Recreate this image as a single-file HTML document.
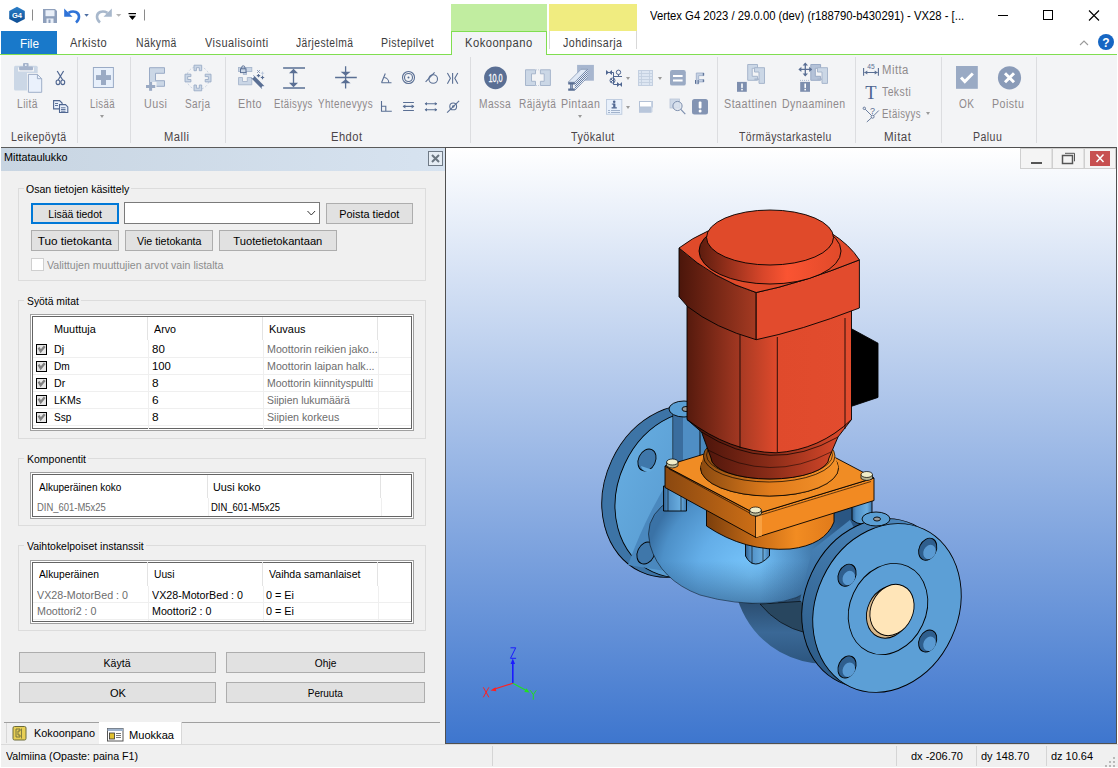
<!DOCTYPE html>
<html><head><meta charset="utf-8">
<style>
*{box-sizing:border-box}
html,body{margin:0;padding:0;width:1118px;height:768px;overflow:hidden;background:#fff;font-family:"Liberation Sans",sans-serif}
.a{position:absolute}
.t{position:absolute;white-space:pre;transform-origin:0 0;font-family:"Liberation Sans",sans-serif}
.sep{position:absolute;top:57px;width:1px;height:86px;background:#dcdde0}
.btn{position:absolute;background:#e1e1e1;border:1px solid #adadad;display:flex;align-items:center;justify-content:center;font-size:11px;color:#000;line-height:11px}
.btn span{display:inline-block;white-space:pre;padding-top:1px}
.btn.blue{border:2px solid #0078d7}
.grp{position:absolute;border:1px solid #dcdcdc}
.tbl{position:absolute;background:#fff;border:1px solid #a0a0a0;box-shadow:inset 0 0 0 1px #fff, inset 0 0 0 2px #646464}
.hl{position:absolute;height:1px;background:#f0f0f0}
.vl{position:absolute;width:1px;background:#ececec}
.cb{position:absolute;width:11px;height:11px;border:1px solid #333;background:#dcdcdc}
.dd{position:absolute;width:0;height:0;border-left:2.5px solid transparent;border-right:2.5px solid transparent;border-top:3px solid #9a9a9a}
</style></head><body>
<!-- title bar -->
<div class="a" style="left:0;top:0;width:1118px;height:31px;background:#fff"></div>
<div class="a" style="left:451px;top:4px;width:96px;height:27px;background:#c1eda0"></div>
<div class="a" style="left:549px;top:4px;width:88px;height:27px;background:#f0ec80"></div>
<!-- tab row -->
<div class="a" style="left:1px;top:31px;width:56px;height:23px;background:#1979ca"></div>
<div class="a" style="left:0;top:54px;width:1117px;height:1px;background:#80de50"></div>
<div class="a" style="left:451px;top:31px;width:96px;height:24px;background:#f3f4f6;border:1px solid #80de50;border-bottom:none"></div>
<div class="a" style="left:549px;top:31px;width:1px;height:18px;background:#d8d8d8"></div>
<div class="a" style="left:636px;top:31px;width:1px;height:18px;background:#d8d8d8"></div>
<!-- ribbon -->
<div class="a" style="left:1px;top:55px;width:1116px;height:92px;background:#f3f4f6"></div>
<div class="a" style="left:0;top:147px;width:1118px;height:1px;background:#5a5a5a"></div>
<div class="sep" style="left:77px"></div><div class="sep" style="left:130px"></div><div class="sep" style="left:225px"></div>
<div class="sep" style="left:470px"></div><div class="sep" style="left:717px"></div><div class="sep" style="left:855px"></div>
<div class="sep" style="left:941px"></div><div class="sep" style="left:1036px"></div>
<div class="dd" style="left:99.5px;top:115px"></div>
<div class="dd" style="left:577.5px;top:115px"></div>
<div class="dd" style="left:625.5px;top:77px"></div>
<div class="dd" style="left:657.5px;top:77px"></div>
<div class="dd" style="left:625.5px;top:106px"></div>
<div class="dd" style="left:925.5px;top:112px"></div>
<!-- left panel -->
<div class="a" style="left:1px;top:148px;width:444px;height:596px;background:#f0f0f0"></div>
<div class="a" style="left:1px;top:148px;width:444px;height:23px;background:linear-gradient(to right,#c8d5e2,#d7e3f0)"></div>
<div class="a" style="left:428px;top:151px;width:15px;height:15px;border:1px solid #6f7a86;background:#e6edf4"></div>
<div class="grp" style="left:18px;top:188px;width:408px;height:93px"></div>
<div class="a" style="left:24px;top:184px;width:107px;height:8px;background:#f0f0f0"></div>
<div class="a" style="left:124px;top:202px;width:196px;height:22px;background:#fff;border:1px solid #7a7a7a"></div>
<div class="a" style="left:31px;top:258px;width:13px;height:13px;background:#fff;border:1px solid #cfcfcf"></div>
<div class="grp" style="left:18px;top:300px;width:408px;height:139px"></div>
<div class="a" style="left:24px;top:296px;width:57px;height:8px;background:#f0f0f0"></div>
<div class="tbl" style="left:30px;top:314px;width:384px;height:117px"></div>
<div class="grp" style="left:18px;top:458px;width:408px;height:68px"></div>
<div class="a" style="left:24px;top:454px;width:64px;height:8px;background:#f0f0f0"></div>
<div class="tbl" style="left:30px;top:472px;width:384px;height:47px"></div>
<div class="grp" style="left:18px;top:545px;width:408px;height:86px"></div>
<div class="a" style="left:24px;top:541px;width:122px;height:8px;background:#f0f0f0"></div>
<div class="tbl" style="left:30px;top:560px;width:384px;height:64px"></div>
<div class="a" style="left:147px;top:317px;width:1px;height:23px;background:#e3e3e3"></div>
<div class="a" style="left:262px;top:317px;width:1px;height:23px;background:#e3e3e3"></div>
<div class="a" style="left:377px;top:317px;width:1px;height:23px;background:#e3e3e3"></div>
<div class="a" style="left:148px;top:340px;width:1px;height:89px;background:#efefef"></div>
<div class="a" style="left:263px;top:340px;width:1px;height:89px;background:#efefef"></div>
<div class="a" style="left:378px;top:340px;width:1px;height:89px;background:#efefef"></div>
<div class="a" style="left:33px;top:357px;width:378px;height:1px;background:#efefef"></div>
<div class="a" style="left:33px;top:374px;width:378px;height:1px;background:#efefef"></div>
<div class="a" style="left:33px;top:391px;width:378px;height:1px;background:#efefef"></div>
<div class="a" style="left:33px;top:408px;width:378px;height:1px;background:#efefef"></div>
<div class="a" style="left:33px;top:425px;width:378px;height:1px;background:#efefef"></div>
<div class="a" style="left:207px;top:475px;width:1px;height:23px;background:#e3e3e3"></div>
<div class="a" style="left:380px;top:475px;width:1px;height:23px;background:#e3e3e3"></div>
<div class="a" style="left:208px;top:498px;width:1px;height:18px;background:#efefef"></div>
<div class="a" style="left:381px;top:498px;width:1px;height:18px;background:#efefef"></div>
<div class="a" style="left:147px;top:562px;width:1px;height:24px;background:#e3e3e3"></div>
<div class="a" style="left:262px;top:562px;width:1px;height:24px;background:#e3e3e3"></div>
<div class="a" style="left:377px;top:562px;width:1px;height:24px;background:#e3e3e3"></div>
<div class="a" style="left:148px;top:586px;width:1px;height:35px;background:#efefef"></div>
<div class="a" style="left:263px;top:586px;width:1px;height:35px;background:#efefef"></div>
<div class="a" style="left:378px;top:586px;width:1px;height:35px;background:#efefef"></div>
<div class="a" style="left:33px;top:602px;width:378px;height:1px;background:#efefef"></div>
<div class="a" style="left:33px;top:619px;width:378px;height:1px;background:#efefef"></div>
<div class="btn blue" style="left:31px;top:203px;width:88px;height:21px"><span style="transform:scaleX(0.953)">Lisää tiedot</span></div>
<div class="btn" style="left:325.5px;top:203px;width:87.5px;height:21px"><span style="transform:scaleX(0.991)">Poista tiedot</span></div>
<div class="btn" style="left:31px;top:230px;width:88px;height:21px"><span style="transform:scaleX(1.068)">Tuo tietokanta</span></div>
<div class="btn" style="left:125px;top:230px;width:88px;height:21px"><span style="transform:scaleX(0.970)">Vie tietokanta</span></div>
<div class="btn" style="left:219px;top:230px;width:118px;height:21px"><span style="transform:scaleX(1.015)">Tuotetietokantaan</span></div>
<div class="btn" style="left:19px;top:652px;width:197px;height:21px"><span style="transform:scaleX(0.959)">Käytä</span></div>
<div class="btn" style="left:226px;top:652px;width:199px;height:21px"><span style="transform:scaleX(0.925)">Ohje</span></div>
<div class="btn" style="left:19px;top:682px;width:197px;height:21px"><span style="transform:scaleX(1.006)">OK</span></div>
<div class="btn" style="left:226px;top:682px;width:199px;height:21px"><span style="transform:scaleX(0.908)">Peruuta</span></div>
<!-- bottom tabs -->
<div class="a" style="left:4px;top:722px;width:436px;height:1px;background:#a0a0a0"></div>
<div class="a" style="left:6px;top:723px;width:93px;height:20px;background:#f0f0f0;border-left:1px solid #d8d8d8"></div>
<div class="a" style="left:99px;top:722px;width:83px;height:22px;background:#fff;border-right:1px solid #d8d8d8"></div>
<!-- viewport -->
<div class="a" style="left:445px;top:147px;width:673px;height:597px;background:#fff"></div>
<div class="a" style="left:446px;top:148px;width:670px;height:595px;background:linear-gradient(#ffffff,#3e76ce);border:none"></div>
<div class="a" style="left:445px;top:147px;width:672px;height:1px;background:#505050"></div>
<div class="a" style="left:445px;top:147px;width:1px;height:597px;background:#505050"></div>
<div class="a" style="left:445px;top:743px;width:672px;height:1px;background:#505050"></div>
<div class="a" style="left:1116px;top:147px;width:1px;height:597px;background:#505050"></div>
<!-- status bar -->
<div class="a" style="left:0;top:744px;width:1118px;height:23px;background:#f0f0f0;border-top:1px solid #dadada"></div>
<div class="a" style="left:492px;top:746px;width:1px;height:20px;background:#d5d5d5"></div>
<div class="a" style="left:896px;top:746px;width:1px;height:20px;background:#d5d5d5"></div>
<div class="a" style="left:976px;top:746px;width:1px;height:20px;background:#d5d5d5"></div>
<div class="a" style="left:1046px;top:746px;width:1px;height:20px;background:#d5d5d5"></div>
<div class="a" style="left:0;top:55px;width:1px;height:713px;background:#fff"></div>
<svg class="a" style="left:0;top:0" width="1118" height="768" viewBox="0 0 1118 768">
<defs>
<clipPath id="vp"><rect x="446" y="148" width="670" height="595"/></clipPath>
<linearGradient id="motorG" x1="687" y1="0" x2="852" y2="0" gradientUnits="userSpaceOnUse">
<stop offset="0" stop-color="#561a0d"/><stop offset="0.323" stop-color="#a33822"/><stop offset="0.324" stop-color="#a83a23"/><stop offset="0.55" stop-color="#e04a2c"/><stop offset="1" stop-color="#e24c2e"/>
</linearGradient>
<linearGradient id="plateL" x1="678" y1="0" x2="756" y2="0" gradientUnits="userSpaceOnUse">
<stop offset="0" stop-color="#4a150a"/><stop offset="1" stop-color="#a53a22"/>
</linearGradient>
<linearGradient id="filletG" x1="699" y1="0" x2="841" y2="0" gradientUnits="userSpaceOnUse">
<stop offset="0" stop-color="#5c1c0e"/><stop offset="0.45" stop-color="#d8462a"/><stop offset="0.62" stop-color="#fa5432"/><stop offset="1" stop-color="#e04a2a"/>
</linearGradient>
<linearGradient id="neckG" x1="700" y1="0" x2="840" y2="0" gradientUnits="userSpaceOnUse">
<stop offset="0" stop-color="#4a140a"/><stop offset="0.5" stop-color="#8a2c18"/><stop offset="1" stop-color="#d8482a"/>
</linearGradient>
<linearGradient id="orL" x1="665" y1="0" x2="756" y2="0" gradientUnits="userSpaceOnUse">
<stop offset="0" stop-color="#8a4810"/><stop offset="1" stop-color="#cc6e16"/>
</linearGradient>
<linearGradient id="orCyl" x1="706" y1="0" x2="835" y2="0" gradientUnits="userSpaceOnUse">
<stop offset="0" stop-color="#7a3e0c"/><stop offset="0.4" stop-color="#c86c16"/><stop offset="0.7" stop-color="#f28c22"/><stop offset="1" stop-color="#e07a1a"/>
</linearGradient>
<linearGradient id="ringG" x1="700" y1="0" x2="839" y2="0" gradientUnits="userSpaceOnUse">
<stop offset="0" stop-color="#8a4a10"/><stop offset="0.5" stop-color="#e07c1c"/><stop offset="1" stop-color="#f5922a"/>
</linearGradient>
<radialGradient id="casG" cx="750" cy="575" r="105" gradientUnits="userSpaceOnUse">
<stop offset="0" stop-color="#78c6fc"/><stop offset="0.5" stop-color="#64aee8"/><stop offset="0.85" stop-color="#4d90c8"/><stop offset="1" stop-color="#3a72a6"/>
</radialGradient>
<linearGradient id="legG" x1="0" y1="0" x2="1" y2="0">
<stop offset="0" stop-color="#2f5e8c"/><stop offset="0.2" stop-color="#4f8ec4"/><stop offset="0.75" stop-color="#6aaee0"/><stop offset="1" stop-color="#3f78ae"/>
</linearGradient>
<linearGradient id="bflG" x1="0" y1="0" x2="1" y2="0">
<stop offset="0" stop-color="#64aade"/><stop offset="1" stop-color="#4f8fc6"/>
</linearGradient>
<linearGradient id="casShade" x1="0" y1="495" x2="0" y2="605" gradientUnits="userSpaceOnUse">
<stop offset="0" stop-color="#1a3a60" stop-opacity="0"/><stop offset="0.6" stop-color="#1a3a60" stop-opacity="0"/><stop offset="1" stop-color="#1a3a60" stop-opacity="0.45"/>
</linearGradient>
<linearGradient id="casShadeR" x1="760" y1="0" x2="830" y2="0" gradientUnits="userSpaceOnUse">
<stop offset="0" stop-color="#1a3a60" stop-opacity="0"/><stop offset="1" stop-color="#1a3a60" stop-opacity="0.5"/>
</linearGradient>
<linearGradient id="volG" x1="0" y1="600" x2="0" y2="665" gradientUnits="userSpaceOnUse">
<stop offset="0" stop-color="#2a4c6e"/><stop offset="0.5" stop-color="#3a6896"/><stop offset="1" stop-color="#2c557e"/>
</linearGradient>
<linearGradient id="rimG" x1="0" y1="515" x2="0" y2="695" gradientUnits="userSpaceOnUse">
<stop offset="0" stop-color="#4a86bc"/><stop offset="1" stop-color="#2c5a86"/>
</linearGradient>
</defs>
<g clip-path="url(#vp)" stroke="#000" stroke-width="0.9" stroke-linejoin="round">
<!-- back flange -->
<ellipse cx="678" cy="491" rx="73" ry="89" transform="rotate(25 678 491)" fill="#3d74a6"/>
<ellipse cx="689" cy="494" rx="71" ry="86" transform="rotate(25 689 494)" fill="url(#bflG)"/>
<path d="M628,565 Q655,490 703,432 L720,470 L690,575 Z" fill="#4a88be" stroke="none"/>
<g fill="#3f77aa">
<ellipse cx="647" cy="460" rx="8.5" ry="11.5" transform="rotate(25 647 460)"/>
<ellipse cx="646" cy="553" rx="8.5" ry="11.5" transform="rotate(25 646 553)"/>
</g>
<path d="M641,466 a8.5,11.5 25 0 0 12,4" fill="#64aade" stroke="none"/>
<!-- rib + lug -->
<path d="M673,409 L673,470 L700,470 L700,409 Z" fill="#4f8ec4"/>
<path d="M673.4,411 L673.4,470 L683,470 L683,413 Z" fill="#3a6d9e" stroke="none"/>
<ellipse cx="684" cy="409" rx="15" ry="8" fill="#5b9fd4"/>
<ellipse cx="686" cy="409" rx="4" ry="2.5" fill="#9a9a9a"/>
<!-- lower volute / pipe neck -->
<path d="M735,590 Q745,632 780,652 Q805,666 835,664 L840,580 L790,585 Z" fill="url(#volG)" stroke="none"/>
<path d="M760,604 Q778,626 806,633 L822,600 Z" fill="#28465f" stroke-width="0.6"/>
<!-- casing -->
<path d="M662,506 Q644,522 650,545 Q660,580 700,595 Q735,605 770,603 Q800,601 815,585 L840,555 L865,515 L870,500 L760,495 L690,492 Z" fill="url(#casG)" stroke-width="0.5"/>
<path d="M662,506 Q644,522 650,545 Q660,580 700,595 Q735,605 770,603 Q800,601 815,585 L840,555 L865,515 L870,500 L760,495 L690,492 Z" fill="url(#casShade)" stroke="none"/>
<path d="M662,506 Q644,522 650,545 Q660,580 700,595 Q735,605 770,603 Q800,601 815,585 L840,555 L865,515 L870,500 L760,495 L690,492 Z" fill="url(#casShadeR)" stroke="none"/>
<!-- legs -->
<path d="M663.5,486 L663.5,511 L686.5,511 L686.5,486 Z" fill="url(#legG)"/>
<path d="M668,487 v24 M681,487 v24" stroke-width="0.6"/>
<path d="M745.5,535 L745.5,556 Q754,572 769.5,556 L769.5,535 Z" fill="url(#legG)"/>
<path d="M752,537 v27 M763,537 v24" stroke-width="0.6"/>
<path d="M852,498 L852,520 Q862,528 872,520 L872,498 Z" fill="url(#legG)"/>
<!-- orange adapter cylinder -->
<path d="M706.5,495 L706.5,526 Q745,552 790,549 Q825,545 834,522 L834,490 Z" fill="url(#orCyl)"/>
<!-- orange plate -->
<path d="M665,466 L756,514 L756,537.5 L665,487.5 Z" fill="url(#orL)"/>
<path d="M756,514 L874,478 L874,500.5 L756,537.5 Z" fill="#f28a22"/>
<path d="M756,514.5 L762,512.5 L762,535.5 L756,537.5 Z" fill="#f8a040" stroke="none"/>
<path d="M665,466 L783,430 L874,478 L756,514 Z" fill="#f08c24"/>
<path d="M669,469 L756,516.5 L871,481.5" fill="none" stroke-width="0.6"/>
<!-- ring boss -->
<ellipse cx="769.5" cy="468" rx="69" ry="28" fill="#e8861e"/>
<path d="M700.5,468 A69,28 0 0 0 838.5,468 L835,456 L703.5,456 Z" fill="url(#ringG)" stroke="none"/>
<path d="M700.5,468 A69,28 0 0 0 838.5,468" fill="none" stroke-width="0.7"/>
<ellipse cx="769.2" cy="456" rx="65.8" ry="26" fill="url(#ringG)" stroke-width="0.7"/>
<ellipse cx="769.5" cy="455" rx="63" ry="24" fill="none" stroke-width="0.6"/>
<!-- red neck -->
<path d="M687,419.5 L701.5,432 L711,458 A59,21 0 0 0 829,458 L838,437 L851.5,419.5 Z" fill="url(#neckG)"/>
<path d="M701.5,432 Q770,476 838,437" fill="none" stroke-width="0.7"/>
<path d="M708,450 Q770,484 831,452" fill="none" stroke-width="0.5"/>
<!-- motor body -->
<path d="M687,296 L687,419.5 Q730,452 776,452.8 Q820,450 851.5,419.5 L851.5,300 Z" fill="url(#motorG)"/>
<path d="M740,335 v113 M777.3,337 v115 M845,318 v111" fill="none" stroke-width="0.8"/>
<!-- terminal box -->
<path d="M851.5,328.8 L878,343.2 L878,397.4 L851.5,406.3 Z" fill="#000"/>
<!-- top plate -->
<path d="M679,248 Q714.7,280 756.2,292.5 L756.2,339.7 Q714.7,328 687.6,306.6 L679,296.7 Z" fill="url(#plateL)"/>
<path d="M756.2,292.5 Q799.6,283.8 859.4,259.9 L859.4,308 Q799.6,331 756.2,339.7 Z" fill="#e24b2d"/>
<path d="M679,248 Q692,238 708,231 L831,233 Q850,245 859.4,259.9 Q799.6,283.8 756.2,292.5 Q714.7,280 679,248 Z" fill="#e04a2a"/>
<!-- fillet + dome -->
<ellipse cx="770" cy="251" rx="71" ry="33" fill="url(#filletG)"/>
<ellipse cx="770" cy="237.5" rx="63.5" ry="27.5" fill="#e04a2a"/>
<!-- bolts -->
<g stroke-width="0.7">
<path d="M666.6,462 L666.6,466 Q672.3,470 678,466 L678,462 Z" fill="#b8b490"/>
<ellipse cx="672.3" cy="462" rx="5.7" ry="3" fill="#f0ecc8"/>
<path d="M749.7,510 L749.7,514 Q755.5,518 761.4,514 L761.4,510 Z" fill="#b8b490"/>
<ellipse cx="755.5" cy="510" rx="5.8" ry="3" fill="#f0ecc8"/>
<path d="M861,474.5 L861,478.5 Q866.8,482.5 872.5,478.5 L872.5,474.5 Z" fill="#b8b490"/>
<ellipse cx="866.8" cy="474.5" rx="5.7" ry="3" fill="#f0ecc8"/>
</g>
<!-- front flange -->
<path d="M800,600 L812,550 L850,520 L870,560 L860,680 Z" fill="url(#rimG)" stroke="none"/>
<ellipse cx="876" cy="603" rx="71" ry="87" transform="rotate(25 876 603)" fill="url(#rimG)"/>
<ellipse cx="887" cy="608" rx="71" ry="87" transform="rotate(25 887 608)" fill="#5c9fd6"/>
<ellipse cx="888" cy="609" rx="38" ry="47" transform="rotate(25 888 609)" fill="#5c9fd6"/>
<ellipse cx="889" cy="612" rx="21.5" ry="27" transform="rotate(25 889 612)" fill="#d9b88a"/>
<ellipse cx="892" cy="610" rx="21" ry="26.5" transform="rotate(25 892 610)" fill="#ffe5b8"/>
<g fill="#2f5f8e">
<ellipse cx="927.7" cy="549.2" rx="8.5" ry="11.5" transform="rotate(25 927.7 549.2)"/>
<ellipse cx="847" cy="575.2" rx="8.5" ry="11.5" transform="rotate(25 847 575.2)"/>
<ellipse cx="927.7" cy="641" rx="8.5" ry="11.5" transform="rotate(25 927.7 641)"/>
<ellipse cx="847" cy="666.9" rx="8.5" ry="11.5" transform="rotate(25 847 666.9)"/>
</g>
<g fill="#5a9ad2" stroke="none">
<ellipse cx="929.5" cy="552" rx="6" ry="7.5" transform="rotate(25 929.5 552)"/>
<ellipse cx="848.8" cy="578" rx="6" ry="7.5" transform="rotate(25 848.8 578)"/>
<ellipse cx="929.5" cy="643.8" rx="6" ry="7.5" transform="rotate(25 929.5 643.8)"/>
<ellipse cx="848.8" cy="669.7" rx="6" ry="7.5" transform="rotate(25 848.8 669.7)"/>
</g>
<ellipse cx="876" cy="519" rx="14" ry="7" fill="#5b9fd4"/>
<ellipse cx="877" cy="519" rx="3.5" ry="2" fill="#9a9a9a"/>
</g>
</svg>

<svg class="a" style="left:0;top:0" width="1118" height="768" viewBox="0 0 1118 768">
<defs>
<linearGradient id="g4g" x1="0" y1="0" x2="0" y2="1"><stop offset="0" stop-color="#2b7fc9"/><stop offset="1" stop-color="#0d4d93"/></linearGradient>
</defs>
<!-- ===== title bar ===== -->
<polygon points="17,6.7 24.8,11 24.8,19 17,23 9.2,19 9.2,11" fill="url(#g4g)"/>
<text x="17" y="18.2" font-family="Liberation Sans" font-weight="bold" font-size="7.5" fill="#fff" text-anchor="middle">G4</text>
<rect x="32" y="9.5" width="1" height="11" fill="#8a8a8a"/>
<!-- save -->
<path d="M43,9 h12 l2,2 v12 h-14 z" fill="#8e9fbb"/>
<rect x="45.5" y="10.2" width="9" height="6" fill="#e9eff8"/>
<rect x="46.5" y="18.5" width="7" height="4.5" fill="#e9eff8"/>
<rect x="48.5" y="19.5" width="2" height="3.5" fill="#8e9fbb"/>
<!-- undo -->
<polygon points="64.2,8.5 64.2,16.8 72.5,16.8" fill="#2f73d8"/><path d="M68.5,12.8 C74,9.8 79,12.5 79,16.8 C79,19.2 77.8,21 76,22.5" fill="none" stroke="#2f73d8" stroke-width="2.6"/>
<polygon points="84.3,14 88.8,14 86.55,16.8" fill="#4d6ea3"/>
<!-- redo -->
<polygon points="111.8,8.5 111.8,16.8 103.5,16.8" fill="#a8b8cc"/><path d="M107.5,12.8 C102,9.8 97,12.5 97,16.8 C97,19.2 98.2,21 100,22.5" fill="none" stroke="#a8b8cc" stroke-width="2.6"/>
<polygon points="116,14 121.4,14 118.7,16.8" fill="#b5b5b5"/>
<!-- customize -->
<rect x="128.5" y="13" width="7.5" height="1.2" fill="#000"/>
<polygon points="128.8,15.8 136,15.8 132.4,20" fill="#000"/>
<rect x="144" y="9.5" width="1" height="11" fill="#8a8a8a"/>
<!-- window controls -->
<rect x="998" y="15" width="10" height="1" fill="#000"/>
<rect x="1043.5" y="10.5" width="9" height="9" fill="none" stroke="#000" stroke-width="1"/>
<path d="M1089,10.5 l10,10 M1099,10.5 l-10,10" stroke="#000" stroke-width="1.1"/>
<!-- ribbon collapse + help -->
<path d="M1080,45 l4,-4 l4,4" fill="none" stroke="#9a9a9a" stroke-width="1.1"/>
<circle cx="1106" cy="42" r="8" fill="#1666c3"/>
<text x="1106" y="46.5" font-family="Liberation Sans" font-weight="bold" font-size="12" fill="#fff" text-anchor="middle">?</text>

<!-- ===== ribbon: Leikepöytä ===== -->
<rect x="14" y="65.8" width="23.7" height="24.8" rx="1.5" fill="#cbd7e6"/>
<rect x="18" y="67.5" width="16" height="4" fill="#f3f4f6"/>
<rect x="19.1" y="66.5" width="13.9" height="3.8" rx="1" fill="#a6b4cc"/>
<rect x="23" y="62.9" width="5.6" height="4" rx="1" fill="#a6b4cc"/>
<rect x="25" y="64.3" width="1.6" height="1.6" fill="#eef2f9"/>
<path d="M27,73 h10.5 l5.5,5.5 v15.3 h-16 z" fill="#f3f4f6"/>
<path d="M28.4,74.4 h9 l4.3,4.3 v13.6 h-13.3 z" fill="#eaf1fc" stroke="#9eaec8" stroke-width="1"/>
<path d="M37.4,74.4 v4.3 h4.3" fill="none" stroke="#9eaec8" stroke-width="1"/>
<!-- scissors -->
<path d="M57.2,71 l5.5,9 M63.6,71 l-5.5,9" stroke="#4f6691" stroke-width="1.2" fill="none"/>
<ellipse cx="58" cy="82.3" rx="1.9" ry="2.3" fill="none" stroke="#4f6691" stroke-width="1.1"/>
<ellipse cx="62.8" cy="82.3" rx="1.9" ry="2.3" fill="none" stroke="#4f6691" stroke-width="1.1"/>
<!-- copy -->
<path d="M53.6,100.6 h6 l2.5,2.5 v5.8 h-8.5 z" fill="#eaf1fc" stroke="#4f6691" stroke-width="1.1"/>
<path d="M59.5,104.6 h6 l2.3,2.3 v5.6 h-8.3 z" fill="#eaf1fc" stroke="#4f6691" stroke-width="1.1"/>
<path d="M55,103.5 h3 M55,105.5 h3 M61,107.8 h4.5 M61,109.5 h4.5 M61,111.2 h4.5" stroke="#4f6691" stroke-width="0.9"/>
<!-- Lisää -->
<rect x="93.4" y="67.5" width="20" height="20" fill="#e8f0fb" stroke="#9aabc6" stroke-width="1"/>
<rect x="96" y="75.1" width="15" height="4.9" fill="#9aaac4"/>
<rect x="101" y="70" width="5" height="15" fill="#9aaac4"/>
<!-- Uusi -->
<path d="M149.5,67.7 h15 v5.6 h-9 v7.4 h9 v5.6 h-15 z" fill="#cbd7e6" stroke="#9aabc6" stroke-width="1"/>
<rect x="144.5" y="82" width="12" height="8" fill="#f3f4f6"/>
<rect x="146" y="85" width="9.2" height="3" fill="#9aaac4"/>
<rect x="149.1" y="82" width="3" height="8.8" fill="#9aaac4"/>
<!-- Sarja -->
<circle cx="198" cy="78" r="11.5" fill="none" stroke="#b9c5d8" stroke-width="0.8" stroke-dasharray="2,2"/>
<path d="M194,70.7 v-5.5 h7.7 v5.5 h-2.4 v-3 h-2.9 v3 z" fill="#cbd7e6" stroke="#9aabc6" stroke-width="0.9"/>
<path d="M194,85 v5.8 h7.7 v-5.8 h-2.4 v3.2 h-2.9 v-3.2 z" fill="#cbd7e6" stroke="#9aabc6" stroke-width="0.9"/>
<path d="M190.9,74.2 h-5.9 v7.7 h5.9 v-2.4 h-3.2 v-2.9 h3.2 z" fill="#cbd7e6" stroke="#9aabc6" stroke-width="0.9"/>
<path d="M205.2,74.2 h5.8 v7.7 h-5.8 v-2.4 h3.2 v-2.9 h-3.2 z" fill="#cbd7e6" stroke="#9aabc6" stroke-width="0.9"/>
<!-- Ehto -->
<rect x="238.5" y="67.5" width="13.3" height="4" fill="#cad6e6" stroke="#a7b6cc" stroke-width="0.9"/>
<rect x="243.3" y="71.5" width="3.3" height="3" fill="#cad6e6" stroke="#a7b6cc" stroke-width="0.8"/>
<rect x="240.5" y="68.8" width="5.5" height="3.8" fill="#cad6e6" stroke="#5a6f94" stroke-width="1"/>
<path d="M241.6,68.8 v-1.3 a1.65,1.65 0 0 1 3.3,0 v1.3" fill="none" stroke="#5a6f94" stroke-width="1"/>
<path d="M238.5,77.5 h4 v4 h4.8 v-4 h4.5 v7.3 h-13.3 z" fill="#cad6e6" stroke="#a7b6cc" stroke-width="0.9"/>
<path d="M252.2,76.5 l10.8,10.8" stroke="#5a6f94" stroke-width="3.8"/>
<path d="M250.8,75.1 l2.6,2.6 M262.2,86.5 l2,2" stroke="#f5f8fd" stroke-width="2.4"/>
<path d="M250.8,75.1 l13.4,13.4" stroke="#7d8fae" stroke-width="0" />
<path d="M257,70 l3,3 M260,70 l-3,3" stroke="#7d8fae" stroke-width="0.8"/>
<path d="M262.5,71.6 v3.2 M260.9,73.2 h3.2" stroke="#b9c7dc" stroke-width="0.9"/>
<path d="M258.5,73.9 v3.4 M256.8,75.6 h3.4" stroke="#5a6f94" stroke-width="1.2"/>
<path d="M262.5,75.8 v3.4 M260.8,77.5 h3.4" stroke="#5a6f94" stroke-width="1.2"/>
<!-- Etäisyys -->
<path d="M283.1,68 h21.9 M283.1,88 h21.9 M293.5,71 v15" stroke="#5a6f94" stroke-width="1.3"/>
<polygon points="293.5,68.8 298,73.2 289,73.2" fill="#5a6f94"/>
<polygon points="293.5,87.2 298,82.8 289,82.8" fill="#5a6f94"/>
<!-- Yhtenevyys -->
<path d="M335.1,77.5 h21.7 M345.6,66.2 v22.4" stroke="#5a6f94" stroke-width="1.3"/>
<polygon points="345.6,75.8 350.6,71.8 340.6,71.8" fill="#5a6f94"/>
<polygon points="345.6,79.2 350.6,83.3 340.6,83.3" fill="#5a6f94"/>
<!-- small constraint icons -->
<g stroke="#5a6f94" stroke-width="1.1" fill="none">
<path d="M381.5,82.8 h10 M381.5,82.8 l3.8,-9.3"/>
<path d="M384.2,77.5 a5,5 0 0 1 4.5,5.3"/>
<circle cx="408.5" cy="77.5" r="6"/><circle cx="408.5" cy="77.5" r="4"/>
<path d="M425.6,81.9 l9,-9.5"/><circle cx="433.2" cy="79" r="4.3"/>
<path d="M452.6,72.9 v10.8 M447.4,72.9 l3,5.4 l-3,5.4 M457.8,72.9 l-3,5.4 l3,5.4"/>
<path d="M381.5,100.9 v10.3 h10.3 M381.5,106.3 h4.3 v4.9"/>
<path d="M403.1,102.5 h10.8 M403.1,106.4 h10.8 M403.1,110.5 h10.8"/>
<path d="M425,103.7 h12 M425,109.7 h12"/>
<path d="M447.1,112.7 l12,-11.8"/><circle cx="453.2" cy="106.4" r="3.4"/>
</g>
<circle cx="408.5" cy="77.5" r="1" fill="#5a6f94"/>
<circle cx="453.2" cy="106.4" r="1.2" fill="#5a6f94"/>
<g fill="#5a6f94">
<polygon points="402.6,106.4 405.4,104.4 405.4,108.4"/><polygon points="414.4,106.4 411.6,104.4 411.6,108.4"/>
<polygon points="424.6,103.7 427,101.9 427,105.5"/><polygon points="437.2,103.7 434.8,101.9 434.8,105.5"/>
<polygon points="424.6,109.7 427,107.9 427,111.5"/><polygon points="437.2,109.7 434.8,107.9 434.8,111.5"/>
</g>
<!-- ===== Työkalut ===== -->
<circle cx="495.5" cy="77.8" r="11.4" fill="#5a6f94"/>
<text x="495.6" y="81.8" font-family="Liberation Sans" font-size="11" fill="#fff" text-anchor="middle" stroke="#fff" stroke-width="0.3" transform="translate(495.6 0) scale(0.66 1) translate(-495.6 0)">10,0</text>
<path d="M525.5,69.8 h10 v4 h-4 v7.5 h4 v4.2 h-10 z" fill="#cbd7e6" stroke="#a7b6cc" stroke-width="1"/>
<path d="M550.4,69.8 h-10 v4 h3.8 v7.5 h-3.8 v4.2 h10 z" fill="#cbd7e6" stroke="#a7b6cc" stroke-width="1"/>
<path d="M536,69.8 h4 M536,85.5 h4" stroke="#b9c5d8" stroke-width="0.8" stroke-dasharray="1,1"/>
<rect x="577.1" y="64.9" width="16.8" height="15.8" fill="#a7b6cf"/>
<pattern id="hatch" width="2" height="2" patternUnits="userSpaceOnUse"><rect width="2" height="2" fill="#e6edf7"/><rect width="1" height="1" fill="#6a7fa3"/><rect x="1" y="1" width="1" height="1" fill="#6a7fa3"/></pattern>
<polygon points="568.2,82.2 581,69.3 587.5,69.3 574.8,82.2" fill="#dfe8f5" stroke="#7d8fae" stroke-width="0.7"/>
<polygon points="574.8,82.2 587.5,69.3 587.5,77.5 574.8,90.8" fill="url(#hatch)"/>
<path d="M568.2,82.2 h6.6 v2.3 h-2 v4 h2 v2.3 h-6.6 v-2.3 h2 v-4 h-2 z" fill="#5a6f94"/>
<rect x="571" y="84.5" width="0.9" height="4" fill="#9aaac4"/>
<!-- network -->
<g stroke="#4f6691" stroke-width="1" fill="none">
<path d="M606.5,72.5 h7 v12 h8.5 M613.5,76.5 h8.5 M618.5,74.5 v2"/>
<circle cx="618.5" cy="72.3" r="2.2"/><circle cx="612.5" cy="80.5" r="2.5"/>
<path d="M610.8,78.8 l3.4,3.4 M614.2,78.8 l-3.4,3.4"/>
</g>
<polygon points="606,70 609,72.5 606,75" fill="#4f6691"/><polygon points="612,70 609,72.5 612,75" fill="#4f6691"/>
<polygon points="617,82 620,84.5 617,87" fill="#4f6691"/><polygon points="622,82 619.5,84.5 622,87" fill="#4f6691"/>
<!-- table -->
<rect x="638.5" y="70.5" width="14" height="15" fill="#dde6f2" stroke="#c3cfe0" stroke-width="1"/>
<path d="M641.5,70.5 v15 M649.5,70.5 v15 M638.5,73.5 h14 M638.5,76.5 h14 M638.5,79.5 h14 M638.5,82.5 h14" stroke="#c3cfe0" stroke-width="0.9"/>
<rect x="670" y="70" width="15.8" height="15.6" rx="2.2" fill="#9aaac4"/>
<rect x="673" y="75" width="9.6" height="2" fill="#fff"/><rect x="673" y="79.5" width="9.6" height="2" fill="#fff"/>
<path d="M696.3,73 h7.6 v2.6 h-5.2 v4 h5.2 v2.3 h-5.2 v1.9 h-2.4 z" fill="#c6d2e4" stroke="#9aabc6" stroke-width="0.8"/><rect x="695" y="80" width="1" height="3.8" fill="#5a6f94"/><rect x="697.6" y="80" width="1.1" height="3.8" fill="#5a6f94"/><rect x="702.8" y="73" width="1.1" height="2.6" fill="#5a6f94"/><rect x="702.8" y="79.6" width="1.1" height="2.3" fill="#5a6f94"/>
<!-- info -->
<rect x="606.5" y="99.5" width="15.3" height="14.8" fill="#e8f0fb" stroke="#c0cde0" stroke-width="1"/>
<circle cx="614.2" cy="101.8" r="1.3" fill="#4f6691"/><rect x="613.2" y="103.6" width="2.2" height="4" fill="#4f6691"/><rect x="611.8" y="103.6" width="3" height="1" fill="#4f6691"/><rect x="611.6" y="107.2" width="5.2" height="1.3" fill="#4f6691"/>
<path d="M608,110.5 h2 M611,110.5 h9 M608,112.5 h2 M611,112.5 h9" stroke="#9aabc6" stroke-width="0.9"/>
<!-- box -->
<rect x="639" y="107" width="12" height="5.8" fill="#b8c6db"/>
<rect x="639.5" y="101.5" width="13" height="5.5" fill="#ffffff" stroke="#b3c1d6" stroke-width="1"/>
<path d="M651,101.5 l1.5,-0.5 v11 l-1.5,1" fill="#c9d4e4"/>
<!-- magnifier -->
<rect x="670" y="99" width="9.5" height="9" fill="#cfd9e8" stroke="#b9c5d8" stroke-width="0.8"/>
<circle cx="677.5" cy="106" r="4.6" fill="#dbe3ee" fill-opacity="0.7" stroke="#7d8fae" stroke-width="1"/>
<path d="M680.8,109.3 l4.5,4.8" stroke="#7d8fae" stroke-width="1.2"/>
<rect x="692" y="99" width="16" height="15.6" rx="2.5" fill="#8394b3"/>
<rect x="698.7" y="101.5" width="2.8" height="7" rx="1" fill="#fff"/><circle cx="700.1" cy="111" r="1.5" fill="#fff"/>
<!-- ===== Törmäystarkastelu ===== -->
<path d="M747.7,64.5 h9.8 v3.8 h-5.3 v8 h5.3 v4 h-9.8 z" fill="#cbd7e6" stroke="#a7b6cc" stroke-width="1"/>
<path d="M764.5,67.7 h-10 v4.3 h4.5 v7.2 h-4.5 v-0 h4.5 v4.2 h5.5 z" fill="#cbd7e6" stroke="#a7b6cc" stroke-width="1"/>
<rect x="737" y="81.9" width="9.8" height="9.9" fill="#7d8eae"/>
<rect x="741.2" y="83.5" width="1.6" height="4.4" fill="#fff"/><rect x="741.2" y="88.8" width="1.6" height="1.6" fill="#fff"/>
<path d="M810.8,64.5 h9.8 v3.8 h-5.3 v8 h5.3 v4 h-9.8 z" fill="#b4c2d8" stroke="#9aabc6" stroke-width="1"/>
<path d="M827.5,67.7 h-10 v4.3 h4.5 v7.2 h-4.5 h4.5 v4.2 h5.5 z" fill="#cbd7e6" stroke="#a7b6cc" stroke-width="1"/>
<path d="M805.3,63.5 v12 M799.3,69.4 h12" stroke="#5a6f94" stroke-width="1.3"/>
<polygon points="805.3,62.5 808,65.5 802.6,65.5" fill="#5a6f94"/><polygon points="805.3,76.4 808,73.4 802.6,73.4" fill="#5a6f94"/>
<polygon points="798.4,69.4 801.4,66.7 801.4,72.1" fill="#5a6f94"/><polygon points="812.2,69.4 809.2,66.7 809.2,72.1" fill="#5a6f94"/>
<path d="M800,80.4 h9.5" stroke="#9aabc6" stroke-width="0.8" stroke-dasharray="1,1"/>
<rect x="800.2" y="81.9" width="9.8" height="9.9" fill="#7d8eae"/>
<rect x="804.4" y="83.5" width="1.6" height="4.4" fill="#fff"/><rect x="804.4" y="88.8" width="1.6" height="1.6" fill="#fff"/>
<!-- ===== Mitat ===== -->
<path d="M863.6,68 v7.8 M878.4,68 v7.8 M864.5,72.5 h13" stroke="#5a6f94" stroke-width="1.1"/>
<polygon points="864.3,72.5 867.3,70.6 867.3,74.4" fill="#5a6f94"/><polygon points="877.7,72.5 874.7,70.6 874.7,74.4" fill="#5a6f94"/>
<text x="871" y="69" font-family="Liberation Sans" font-size="7" fill="#5a6f94" text-anchor="middle" transform="translate(871 0) scale(0.95 1) translate(-871 0)">45</text>
<text x="871" y="99.2" font-family="Liberation Serif" font-size="18.5" fill="#4f6691" text-anchor="middle">T</text>
<g stroke="#5a6f94" stroke-width="0.9" fill="none">
<circle cx="864.3" cy="108.3" r="1.2"/><path d="M865.2,109.2 l6.4,6.4"/><circle cx="872.6" cy="116.7" r="1.5"/>
<path d="M866.8,122 l4.8,-4.3 M873.7,115.7 l5.1,-5.2"/>
</g>
<text x="872.5" y="113.5" font-family="Liberation Sans" font-size="9" fill="#5a6f94" text-anchor="middle">?</text>
<!-- ===== Paluu ===== -->
<rect x="956" y="66" width="21.8" height="22.8" fill="#9aaac4"/>
<path d="M961,77.5 l3.8,4 l8,-8" fill="none" stroke="#fff" stroke-width="3"/>
<circle cx="1009.5" cy="77.8" r="11.6" fill="#8a9bb8"/>
<path d="M1005,73.3 l9,9 M1014,73.3 l-9,9" stroke="#fff" stroke-width="3"/>

<!-- ===== panel ===== -->
<path d="M432,155 l7,7 M439,155 l-7,7" stroke="#6b7680" stroke-width="2"/>
<path d="M307.5,211 l3.8,4 l3.8,-4" fill="none" stroke="#333" stroke-width="1"/>
<!-- table checkboxes -->
<g>
<rect x="36.5" y="344.5" width="10" height="10" fill="#e6e6e6" stroke="#000" stroke-width="1"/>
<rect x="36.5" y="361.5" width="10" height="10" fill="#e6e6e6" stroke="#000" stroke-width="1"/>
<rect x="36.5" y="378.5" width="10" height="10" fill="#e6e6e6" stroke="#000" stroke-width="1"/>
<rect x="36.5" y="395.5" width="10" height="10" fill="#e6e6e6" stroke="#000" stroke-width="1"/>
<rect x="36.5" y="412.5" width="10" height="10" fill="#e6e6e6" stroke="#000" stroke-width="1"/>
</g>
<g stroke="#808080" stroke-width="2.3" fill="none">
<path d="M38.6,347.6 l2.1,3.6 l4,-5"/><path d="M38.6,364.6 l2.1,3.6 l4,-5"/><path d="M38.6,381.6 l2.1,3.6 l4,-5"/><path d="M38.6,398.6 l2.1,3.6 l4,-5"/><path d="M38.6,415.6 l2.1,3.6 l4,-5"/>
</g>
<!-- bottom tab icons -->
<rect x="13" y="726.5" width="13" height="13.5" rx="1.5" fill="#e8cf55" stroke="#6b6b3a" stroke-width="1"/>
<path d="M16,729 h4 v2 h-2 v4 h2 v2 h-4 z" fill="none" stroke="#6b6b3a" stroke-width="0.9"/>
<path d="M21.5,728.5 v10" stroke="#6b6b3a" stroke-width="0.8"/>
<rect x="107.5" y="728.5" width="15.5" height="12.5" fill="#fff" stroke="#555" stroke-width="1"/>
<rect x="107.5" y="728.5" width="15.5" height="2.5" fill="#9fb3cc"/>
<rect x="109.5" y="733" width="5" height="6" fill="#e0c030" stroke="#333" stroke-width="0.8"/>
<path d="M116,733.5 h5 M116,735.5 h5 M116,737.5 h5" stroke="#555" stroke-width="0.8"/>
<!-- status grip -->
<g fill="#b9b9b9">
<rect x="1113" y="757" width="2" height="2"/><rect x="1109" y="761" width="2" height="2"/><rect x="1113" y="761" width="2" height="2"/>
<rect x="1105" y="765" width="2" height="2"/><rect x="1109" y="765" width="2" height="2"/><rect x="1113" y="765" width="2" height="2"/>
</g>
<!-- viewport child controls -->
<rect x="1020.5" y="148.5" width="31.5" height="20" fill="#f4f4f4" stroke="#cfcfcf" stroke-width="1"/>
<rect x="1052.5" y="148.5" width="31.5" height="20" fill="#f4f4f4" stroke="#cfcfcf" stroke-width="1"/>
<rect x="1084.5" y="148.5" width="31" height="20" fill="#f4f4f4" stroke="#cfcfcf" stroke-width="1"/>
<rect x="1031" y="162" width="11" height="2" fill="#555"/>
<rect x="1062.5" y="155.5" width="10" height="8" fill="none" stroke="#555" stroke-width="1.5"/>
<path d="M1065,153.3 h9.5 v8" fill="none" stroke="#555" stroke-width="1"/>
<rect x="1090" y="151" width="20" height="15" fill="#c75050"/>
<path d="M1096.5,154.5 l7,7.5 M1103.5,154.5 l-7,7.5" stroke="#fff" stroke-width="1.5"/>
<!-- axis triad -->
<path d="M512.8,683.3 v-21" stroke="#1a1aff" stroke-width="1.6"/>
<polygon points="512.8,658.5 515,664 510.6,664" fill="#1a1aff"/>
<path d="M510.5,647.8 h5.2 l-5.2,10.5 h5.6" fill="none" stroke="#1a1aff" stroke-width="1"/>
<path d="M512.8,683.3 l-19,6" stroke="#ff2020" stroke-width="1.2"/>
<polygon points="490.5,690.6 495.5,687.3 496.3,691.2" fill="#ff2020"/>
<path d="M483.3,687.3 l5.6,10 M488.9,687.3 l-5.6,10" stroke="#ff2020" stroke-width="1"/>
<path d="M512.8,683.3 l14,7.5" stroke="#20e020" stroke-width="1.2"/>
<polygon points="529.5,692.5 524.3,692 526.5,688.2" fill="#20e020"/>
<path d="M530.3,690.2 l3,4.5 l3,-4.5 M533.3,694.7 v5" fill="none" stroke="#20e020" stroke-width="1"/>
</svg>

<span class="t" style="left:649.5px;top:10.0px;font-size:12px;line-height:12px;color:#000;transform:scaleX(0.940);">Vertex G4 2023 / 29.0.00 (dev) (r188790-b430291) - VX28 - [...</span>
<span class="t" style="left:19.5px;top:38.0px;font-size:12px;line-height:12px;color:#fff;transform:scaleX(0.982);">File</span>
<span class="t" style="left:70.1px;top:37.0px;font-size:12px;line-height:12px;color:#3d3d3d;transform:scaleX(0.923);letter-spacing:0.5px;">Arkisto</span>
<span class="t" style="left:135.5px;top:37.0px;font-size:12px;line-height:12px;color:#3d3d3d;transform:scaleX(0.868);letter-spacing:0.5px;">Näkymä</span>
<span class="t" style="left:204.9px;top:37.0px;font-size:12px;line-height:12px;color:#3d3d3d;transform:scaleX(0.913);letter-spacing:0.5px;">Visualisointi</span>
<span class="t" style="left:296.1px;top:37.0px;font-size:12px;line-height:12px;color:#3d3d3d;transform:scaleX(0.859);letter-spacing:0.5px;">Järjestelmä</span>
<span class="t" style="left:381.3px;top:37.0px;font-size:12px;line-height:12px;color:#3d3d3d;transform:scaleX(0.882);letter-spacing:0.5px;">Pistepilvet</span>
<span class="t" style="left:464.5px;top:37.0px;font-size:12px;line-height:12px;color:#3d3d3d;transform:scaleX(0.934);letter-spacing:0.5px;">Kokoonpano</span>
<span class="t" style="left:562.8px;top:37.0px;font-size:12px;line-height:12px;color:#3d3d3d;transform:scaleX(0.888);letter-spacing:0.5px;">Johdinsarja</span>
<span class="t" style="left:17.0px;top:98.0px;font-size:12px;line-height:12px;color:#8f8a8c;transform:scaleX(0.857);letter-spacing:0.5px;">Liitä</span>
<span class="t" style="left:89.5px;top:98.0px;font-size:12px;line-height:12px;color:#8f8a8c;transform:scaleX(0.802);letter-spacing:0.5px;">Lisää</span>
<span class="t" style="left:144.1px;top:98.0px;font-size:12px;line-height:12px;color:#8f8a8c;transform:scaleX(0.896);letter-spacing:0.5px;">Uusi</span>
<span class="t" style="left:184.9px;top:98.0px;font-size:12px;line-height:12px;color:#8f8a8c;transform:scaleX(0.832);letter-spacing:0.5px;">Sarja</span>
<span class="t" style="left:237.9px;top:98.0px;font-size:12px;line-height:12px;color:#8f8a8c;transform:scaleX(0.903);letter-spacing:0.5px;">Ehto</span>
<span class="t" style="left:274.0px;top:98.0px;font-size:12px;line-height:12px;color:#8f8a8c;transform:scaleX(0.797);letter-spacing:0.5px;">Etäisyys</span>
<span class="t" style="left:317.5px;top:98.0px;font-size:12px;line-height:12px;color:#8f8a8c;transform:scaleX(0.820);letter-spacing:0.5px;">Yhtenevyys</span>
<span class="t" style="left:478.9px;top:98.0px;font-size:12px;line-height:12px;color:#8f8a8c;transform:scaleX(0.851);letter-spacing:0.5px;">Massa</span>
<span class="t" style="left:518.9px;top:98.0px;font-size:12px;line-height:12px;color:#8f8a8c;transform:scaleX(0.842);letter-spacing:0.5px;">Räjäytä</span>
<span class="t" style="left:560.8px;top:98.0px;font-size:12px;line-height:12px;color:#8f8a8c;transform:scaleX(0.889);letter-spacing:0.5px;">Pintaan</span>
<span class="t" style="left:723.9px;top:98.0px;font-size:12px;line-height:12px;color:#8f8a8c;transform:scaleX(0.899);letter-spacing:0.5px;">Staattinen</span>
<span class="t" style="left:782.3px;top:98.0px;font-size:12px;line-height:12px;color:#8f8a8c;transform:scaleX(0.880);letter-spacing:0.5px;">Dynaaminen</span>
<span class="t" style="left:959.3px;top:98.0px;font-size:12px;line-height:12px;color:#8f8a8c;transform:scaleX(0.840);letter-spacing:0.5px;">OK</span>
<span class="t" style="left:992.0px;top:98.0px;font-size:12px;line-height:12px;color:#8f8a8c;transform:scaleX(0.888);letter-spacing:0.5px;">Poistu</span>
<span class="t" style="left:882.0px;top:64.0px;font-size:12px;line-height:12px;color:#8f8a8c;transform:scaleX(0.943);letter-spacing:0.5px;">Mitta</span>
<span class="t" style="left:882.0px;top:86.0px;font-size:12px;line-height:12px;color:#8f8a8c;transform:scaleX(0.867);letter-spacing:0.5px;">Teksti</span>
<span class="t" style="left:882.0px;top:108.0px;font-size:12px;line-height:12px;color:#8f8a8c;transform:scaleX(0.801);letter-spacing:0.5px;">Etäisyys</span>
<span class="t" style="left:10.5px;top:131.0px;font-size:12px;line-height:12px;color:#4b4548;transform:scaleX(0.882);letter-spacing:0.5px;">Leikepöytä</span>
<span class="t" style="left:163.9px;top:131.0px;font-size:12px;line-height:12px;color:#4b4548;transform:scaleX(0.935);letter-spacing:0.5px;">Malli</span>
<span class="t" style="left:330.9px;top:131.0px;font-size:12px;line-height:12px;color:#4b4548;transform:scaleX(0.930);letter-spacing:0.5px;">Ehdot</span>
<span class="t" style="left:570.5px;top:131.0px;font-size:12px;line-height:12px;color:#4b4548;transform:scaleX(0.899);letter-spacing:0.5px;">Työkalut</span>
<span class="t" style="left:738.5px;top:131.0px;font-size:12px;line-height:12px;color:#4b4548;transform:scaleX(0.865);letter-spacing:0.5px;">Törmäystarkastelu</span>
<span class="t" style="left:884.1px;top:131.0px;font-size:12px;line-height:12px;color:#4b4548;transform:scaleX(0.961);letter-spacing:0.5px;">Mitat</span>
<span class="t" style="left:972.9px;top:131.0px;font-size:12px;line-height:12px;color:#4b4548;transform:scaleX(0.882);letter-spacing:0.5px;">Paluu</span>
<span class="t" style="left:3.9px;top:152.0px;font-size:11px;line-height:11px;color:#000;transform:scaleX(0.981);">Mittataulukko</span>
<span class="t" style="left:26.0px;top:183.5px;font-size:11px;line-height:11px;color:#000;transform:scaleX(0.960);">Osan tietojen käsittely</span>
<span class="t" style="left:26.8px;top:296.0px;font-size:11px;line-height:11px;color:#000;transform:scaleX(0.941);">Syötä mitat</span>
<span class="t" style="left:26.8px;top:454.0px;font-size:11px;line-height:11px;color:#000;transform:scaleX(0.955);">Komponentit</span>
<span class="t" style="left:26.8px;top:541.0px;font-size:11px;line-height:11px;color:#000;transform:scaleX(0.951);">Vaihtokelpoiset instanssit</span>
<span class="t" style="left:47.1px;top:260.0px;font-size:11px;line-height:11px;color:#8d8d8d;transform:scaleX(0.963);">Valittujen muuttujien arvot vain listalta</span>
<span class="t" style="left:6.1px;top:751.0px;font-size:11px;line-height:11px;color:#000;transform:scaleX(0.970);">Valmiina (Opaste: paina F1)</span>
<span class="t" style="left:911.0px;top:751.0px;font-size:11px;line-height:11px;color:#000;transform:scaleX(1.000);">dx -206.70</span>
<span class="t" style="left:980.5px;top:751.0px;font-size:11px;line-height:11px;color:#000;transform:scaleX(0.999);">dy 148.70</span>
<span class="t" style="left:1050.8px;top:751.0px;font-size:11px;line-height:11px;color:#000;transform:scaleX(0.995);">dz 10.64</span>
<span class="t" style="left:54.2px;top:324.0px;font-size:11px;line-height:11px;color:#000;transform:scaleX(0.988);">Muuttuja</span>
<span class="t" style="left:153.9px;top:324.0px;font-size:11px;line-height:11px;color:#000;transform:scaleX(0.972);">Arvo</span>
<span class="t" style="left:268.5px;top:324.0px;font-size:11px;line-height:11px;color:#000;transform:scaleX(0.994);">Kuvaus</span>
<span class="t" style="left:54.1px;top:343.8px;font-size:11px;line-height:11px;color:#000;transform:scaleX(0.962);">Dj</span>
<span class="t" style="left:151.7px;top:343.8px;font-size:11px;line-height:11px;color:#000;transform:scaleX(1.045);">80</span>
<span class="t" style="left:266.8px;top:343.8px;font-size:11px;line-height:11px;color:#6d6d6d;transform:scaleX(0.973);">Moottorin reikien jako...</span>
<span class="t" style="left:54.1px;top:360.8px;font-size:11px;line-height:11px;color:#000;transform:scaleX(0.923);">Dm</span>
<span class="t" style="left:151.7px;top:360.8px;font-size:11px;line-height:11px;color:#000;transform:scaleX(1.029);">100</span>
<span class="t" style="left:266.8px;top:360.8px;font-size:11px;line-height:11px;color:#6d6d6d;transform:scaleX(0.972);">Moottorin laipan halk...</span>
<span class="t" style="left:54.1px;top:377.8px;font-size:11px;line-height:11px;color:#000;transform:scaleX(0.965);">Dr</span>
<span class="t" style="left:151.7px;top:377.8px;font-size:11px;line-height:11px;color:#000;transform:scaleX(1.078);">8</span>
<span class="t" style="left:266.8px;top:377.8px;font-size:11px;line-height:11px;color:#6d6d6d;transform:scaleX(0.953);">Moottorin kiinnityspultti</span>
<span class="t" style="left:54.1px;top:394.8px;font-size:11px;line-height:11px;color:#000;transform:scaleX(0.960);">LKMs</span>
<span class="t" style="left:151.7px;top:394.8px;font-size:11px;line-height:11px;color:#000;transform:scaleX(1.078);">6</span>
<span class="t" style="left:266.8px;top:394.8px;font-size:11px;line-height:11px;color:#6d6d6d;transform:scaleX(0.947);">Siipien lukumäärä</span>
<span class="t" style="left:54.1px;top:411.8px;font-size:11px;line-height:11px;color:#000;transform:scaleX(0.917);">Ssp</span>
<span class="t" style="left:151.7px;top:411.8px;font-size:11px;line-height:11px;color:#000;transform:scaleX(1.078);">8</span>
<span class="t" style="left:266.8px;top:411.8px;font-size:11px;line-height:11px;color:#6d6d6d;transform:scaleX(0.969);">Siipien korkeus</span>
<span class="t" style="left:38.6px;top:482.0px;font-size:11px;line-height:11px;color:#000;transform:scaleX(0.911);">Alkuperäinen koko</span>
<span class="t" style="left:212.8px;top:482.0px;font-size:11px;line-height:11px;color:#000;transform:scaleX(0.984);">Uusi koko</span>
<span class="t" style="left:36.7px;top:502.0px;font-size:11px;line-height:11px;color:#6d6d6d;transform:scaleX(0.859);">DIN_601-M5x25</span>
<span class="t" style="left:210.7px;top:502.0px;font-size:11px;line-height:11px;color:#000;transform:scaleX(0.861);">DIN_601-M5x25</span>
<span class="t" style="left:38.6px;top:569.0px;font-size:11px;line-height:11px;color:#000;transform:scaleX(0.934);">Alkuperäinen</span>
<span class="t" style="left:154.2px;top:569.0px;font-size:11px;line-height:11px;color:#000;transform:scaleX(0.931);">Uusi</span>
<span class="t" style="left:268.7px;top:569.0px;font-size:11px;line-height:11px;color:#000;transform:scaleX(0.961);">Vaihda samanlaiset</span>
<span class="t" style="left:36.5px;top:589.5px;font-size:11px;line-height:11px;color:#6d6d6d;transform:scaleX(0.973);">VX28-MotorBed : 0</span>
<span class="t" style="left:151.5px;top:589.5px;font-size:11px;line-height:11px;color:#000;transform:scaleX(0.973);">VX28-MotorBed : 0</span>
<span class="t" style="left:266.3px;top:589.5px;font-size:11px;line-height:11px;color:#000;transform:scaleX(0.985);">0 = Ei</span>
<span class="t" style="left:36.5px;top:606.0px;font-size:11px;line-height:11px;color:#6d6d6d;transform:scaleX(0.973);">Moottori2 : 0</span>
<span class="t" style="left:151.5px;top:606.0px;font-size:11px;line-height:11px;color:#000;transform:scaleX(0.973);">Moottori2 : 0</span>
<span class="t" style="left:266.3px;top:606.0px;font-size:11px;line-height:11px;color:#000;transform:scaleX(0.985);">0 = Ei</span>
<span class="t" style="left:33.5px;top:728.0px;font-size:11px;line-height:11px;color:#000;transform:scaleX(0.987);">Kokoonpano</span>
<span class="t" style="left:128.7px;top:730.0px;font-size:11px;line-height:11px;color:#000;transform:scaleX(1.008);">Muokkaa</span>
</body></html>
